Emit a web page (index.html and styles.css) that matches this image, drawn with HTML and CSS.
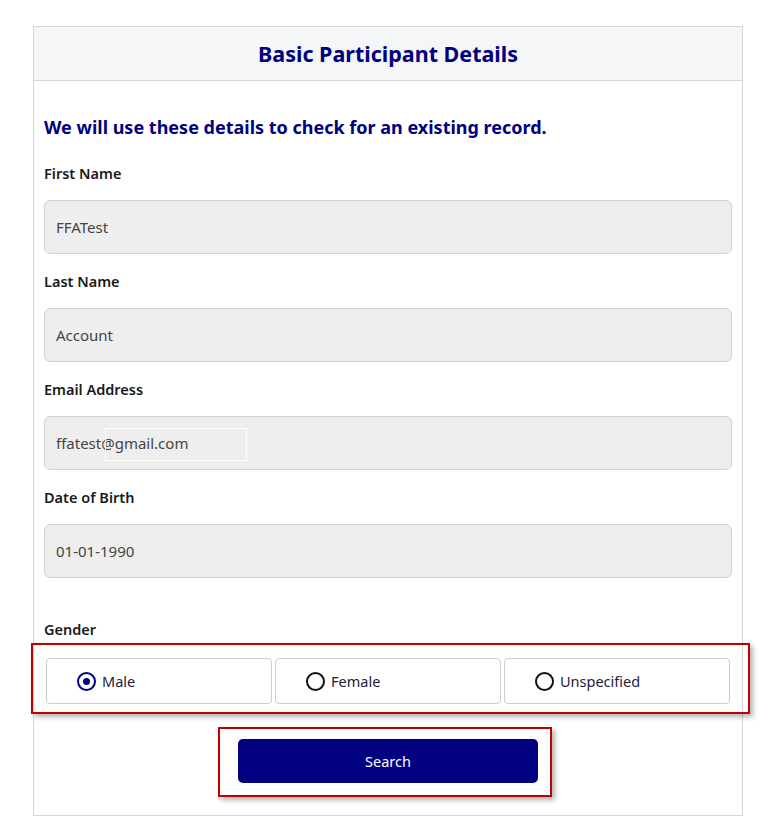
FILE: index.html
```html
<!DOCTYPE html>
<html lang="en">
<head>
  <meta charset="UTF-8" />
  <title>Basic Participant Details</title>
  <meta name="viewport" content="width=device-width, initial-scale=1.0"/>
  <link rel="stylesheet" href="styles.css">
</head>
<body>
  <div class="card">
    <div class="card-header">
      <h1>Basic Participant Details</h1>
    </div>
    <div class="card-body">
      <h2>We will use these details to check for an existing record.</h2>

      <label class="field-label" for="firstName">First Name</label>
      <input class="field" id="firstName" type="text" value="FFATest" readonly>

      <label class="field-label" for="lastName">Last Name</label>
      <input class="field" id="lastName" type="text" value="Account" readonly>

      <label class="field-label" for="email">Email Address</label>
      <div class="field-wrap autofill">
        <input class="field" id="email" type="text" value="ffatest@gmail.com" readonly>
      </div>

      <label class="field-label" for="dob">Date of Birth</label>
      <input class="field" id="dob" type="text" value="01-01-1990" readonly>

      <div class="field-label gender-label">Gender</div>
      <div class="highlight highlight-gender">
        <div class="gender-group">
          <label class="gender-option">
            <input type="radio" name="gender" value="male" checked>
            <span class="radio-mark"></span>
            <span>Male</span>
          </label>
          <label class="gender-option">
            <input type="radio" name="gender" value="female">
            <span class="radio-mark"></span>
            <span>Female</span>
          </label>
          <label class="gender-option">
            <input type="radio" name="gender" value="unspecified">
            <span class="radio-mark"></span>
            <span>Unspecified</span>
          </label>
        </div>
      </div>

      <div class="actions">
        <div class="highlight highlight-search">
          <button type="button" class="btn-search">Search</button>
        </div>
      </div>
    </div>
  </div>
</body>
</html>
```

FILE: styles.css
```css
body {
  font-family: "Noto Sans", "Open Sans", sans-serif;
  background: #fff;
  margin: 0;
  color: #222;
}
.card {
  width: 708px;
  margin: 26px 0 0 33px;
  border: 1px solid #d6d6d6;
  background: white;
}
.card-header {
  height: 53px;
  background: #f5f6f8;
  border-bottom: 1px solid #d6d6d6;
  display: flex;
  align-items: center;
  justify-content: center;
}
.card-header h1 {
  margin: 0 0 1px 0;
  font-size: 21.5px;
  font-weight: 700;
  color: #000080;
}
.card-body {
  padding: 34px 10px 32px 10px;
}
.card-body h2 {
  margin: 0 0 24px 0;
  font-size: 18px;
  line-height: 24px;
  font-weight: 700;
  color: #000080;
}
.field-label {
  display: block;
  font-size: 14.5px;
  line-height: 20px;
  font-weight: 600;
  color: #1a1a1a;
  margin-bottom: 17px;
}
.field {
  display: block;
  width: 100%;
  height: 54px;
  box-sizing: border-box;
  padding: 0 11px;
  font-family: inherit;
  font-size: 15px;
  color: #444;
  background: #eeeeee;
  border: 1px solid #cdd1d8;
  border-radius: 6px;
  margin-bottom: 17px;
  outline: none;
}
.field-wrap {
  position: relative;
}
.autofill::after {
  content: "";
  position: absolute;
  left: 61px;
  top: 12px;
  width: 140px;
  height: 31px;
  border: 1px solid rgba(255,255,255,0.9);
  pointer-events: none;
}
.gender-label {
  margin-top: 41px;
  margin-bottom: 19px;
}

/* red annotation boxes */
.highlight {
  position: relative;
}
.highlight::before {
  content: "";
  position: absolute;
  border: 2px solid #c00000;
  box-shadow: 3px 3px 5px rgba(0,0,0,0.3);
  pointer-events: none;
}
.highlight-gender::before {
  left: -13px;
  right: -18px;
  top: -15px;
  bottom: -10px;
}
.highlight-search::before {
  left: -20px;
  right: -14px;
  top: -12px;
  bottom: -14px;
}

.gender-group {
  display: grid;
  grid-template-columns: 1fr 1fr 1fr;
  gap: 3px;
  padding: 0 2px;
}
.gender-option {
  display: flex;
  align-items: center;
  gap: 6px;
  height: 46px;
  box-sizing: border-box;
  padding-left: 30px;
  border: 1px solid #cccccc;
  border-radius: 4px;
  font-size: 14.5px;
  color: #1c1c3a;
  cursor: pointer;
}
.gender-option input {
  display: none;
}
.radio-mark {
  width: 19px;
  height: 19px;
  box-sizing: border-box;
  border: 2px solid #111;
  border-radius: 50%;
  display: flex;
  align-items: center;
  justify-content: center;
}
.gender-option input:checked + .radio-mark {
  border-color: #000080;
}
.gender-option input:checked + .radio-mark::after {
  content: "";
  width: 7px;
  height: 7px;
  border-radius: 50%;
  background: #000080;
}

.actions {
  display: flex;
  justify-content: center;
  margin-top: 35px;
}
.btn-search {
  display: block;
  width: 300px;
  height: 44px;
  background-color: #000080;
  color: white;
  border: none;
  border-radius: 5px;
  font-family: inherit;
  font-size: 14.5px;
  cursor: pointer;
}
```
